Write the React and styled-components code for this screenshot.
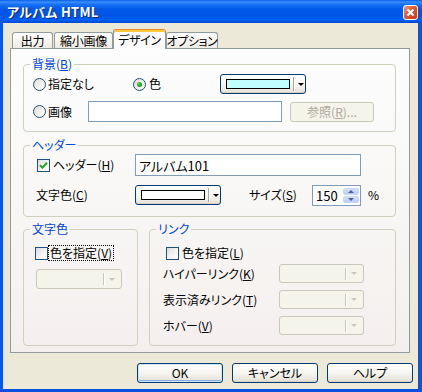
import React from 'react'
import styled, { createGlobalStyle } from 'styled-components'

const GlobalStyle = createGlobalStyle`
html, body { margin: 0; padding: 0; background: #fff; }
body {
  font-family: "Noto Sans CJK JP", "Noto Sans", sans-serif;
  font-size: 12px;
  color: #000;
  font-feature-settings: "palt";
}
* { box-sizing: border-box; }
`

const Window = styled.div`
width: 422px;
height: 392px;
display: flex;
flex-direction: column;
background: #0054e3;
`

const TitleBar = styled.div`
height: 23px;
flex: none;
display: flex;
align-items: center;
justify-content: space-between;
padding: 0 4px 0 7px;
background: linear-gradient(to bottom, #0a5ee6 0%, #3b8ffb 9%, #1a73f5 18%, #0058e8 40%, #0055e5 70%, #0060f2 88%, #0046cf 100%);
`

const Title = styled.div`
color: #fff;
font-weight: bold;
font-size: 13px;
letter-spacing: 0.3px;
text-shadow: 1px 1px 0 #0a2a8a;
`

const CloseButton = styled.div`
width: 15px;
height: 15px;
margin-top: 1px;
border: 1px solid #fff;
border-radius: 3px;
background: linear-gradient(135deg, #f39a7e 0%, #e2582f 45%, #c2391a 100%);
display: flex;
align-items: center;
justify-content: center;
`

const Body = styled.div`
flex: 1;
display: flex;
flex-direction: column;
background: #ece9d8;
border-left: 3px solid #0a55e6;
border-right: 4px solid #0a55e6;
border-bottom: 3px solid #0a4fe0;
padding: 6px 5px 6px 7px;
`

const TabRow = styled.div`
height: 19px;
flex: none;
display: flex;
align-items: flex-end;
padding-left: 2px;
`

const Tab = styled.div`
position: relative;
width: ${p => p.$w}px;
height: ${p => (p.$active ? 20 : 16)}px;
margin-bottom: ${p => (p.$active ? -1 : 0)}px;
margin-left: ${p => p.$ml || 0}px;
z-index: ${p => (p.$active ? 1 : 0)};
border: 1px solid #919b9c;
border-bottom: none;
border-top-color: ${p => (p.$active ? '#e68b2c' : '#919b9c')};
border-radius: 3px 3px 0 0;
background: ${p => (p.$active ? '#fcfcfe' : 'linear-gradient(to bottom, #fefefe, #f4f3ee 60%, #ecebe4)')};
box-shadow: ${p => (p.$active ? 'inset 0 2px 0 #ffc73c' : 'none')};
display: flex;
align-items: center;
justify-content: center;
padding-top: ${p => (p.$active ? 1 : 0)}px;
font-size: 12px;
line-height: 14px;
white-space: nowrap;
letter-spacing: -0.3px;
`

const Panel = styled.div`
height: 305px;
flex: none;
margin-right: 3px;
border: 1px solid #919b9c;
background: linear-gradient(to bottom, #fdfdfe 0%, #f8f7f5 50%, #f4efee 100%);
padding: 8px 13px 6px 12px;
display: flex;
flex-direction: column;
`

const Group = styled.fieldset`
margin: 0;
padding: 0;
min-width: 0;
height: ${p => p.$h}px;
width: ${p => (p.$w ? `${p.$w}px` : 'auto')};
flex: none;
border: 1px solid #d0d0bf;
border-radius: 4px;
margin-top: ${p => p.$mt || 0}px;
`

const Legend = styled.legend`
margin-left: 6px;
padding: 0 2px;
color: #0046d5;
font-size: 12px;
line-height: 14px;
`

const GroupBody = styled.div`
display: flex;
flex-direction: column;
gap: ${p => p.$gap}px;
padding: ${p => p.$pad};
`

const Row = styled.div`
height: ${p => p.$h}px;
margin-bottom: ${p => p.$mb || 0}px;
display: flex;
align-items: center;
`

const GroupPair = styled.div`
display: flex;
gap: 11px;
margin-top: 5px;
`

const ChoiceLabel = styled.label`
display: flex;
align-items: center;
gap: ${p => (p.$gap === undefined ? 3 : p.$gap)}px;
width: ${p => (p.$w ? `${p.$w}px` : 'auto')};
padding-left: ${p => p.$pl || 0}px;
flex: none;
white-space: nowrap;
line-height: 14px;
`

const LabelText = styled.span`
white-space: nowrap;
${p => p.$focus && `
  outline: 1px dotted #000;
  padding: 0 1px;
  margin-left: -1px;
`}
`

const Radio = styled.span`
width: 13px;
height: 13px;
flex: none;
border-radius: 50%;
border: 1px solid #1c5180;
background: linear-gradient(135deg, #dcd9cd 0%, #f2f1ec 55%, #ffffff 100%);
display: flex;
align-items: center;
justify-content: center;
&::after {
  content: '';
  display: ${p => (p.$checked ? 'block' : 'none')};
  width: 5px;
  height: 5px;
  border-radius: 50%;
  background: radial-gradient(circle at 35% 35%, #5bd35b, #21a121 60%, #1a8a1a);
}
`

const Check = styled.span`
width: 13px;
height: 13px;
flex: none;
border: 1px solid #1c5180;
background: linear-gradient(135deg, #dcdcd7 0%, #f4f4f1 55%, #ffffff 100%);
display: flex;
align-items: center;
justify-content: center;
`

const FieldLabel = styled.span`
width: ${p => (p.$w ? `${p.$w}px` : 'auto')};
margin-left: ${p => p.$ml || 0}px;
flex: none;
white-space: nowrap;
line-height: 14px;
`

const TextBox = styled.div`
width: ${p => p.$w}px;
height: ${p => p.$h}px;
flex: none;
border: 1px solid #7f9db9;
background: #fff;
padding-left: 3px;
display: flex;
align-items: center;
font-size: 13px;
`

const ColorCombo = styled.div`
width: 86px;
height: 20px;
flex: none;
border: 1px solid #003c74;
border-radius: 3px;
background: linear-gradient(to bottom, #ffffff 0%, #f5f4ef 60%, #e3e0d5 100%);
box-shadow: inset 0 -1px 0 #d6d0c5;
display: flex;
align-items: center;
padding: 0 4px 0 5px;
gap: 3px;
`

const Swatch = styled.span`
width: 64px;
height: 10px;
flex: none;
border: 1px solid #000;
background: ${p => p.$color};
`

const Separator = styled.span`
width: 2px;
height: ${p => p.$h || 14}px;
flex: none;
border-left: 1px solid ${p => p.$c || '#aca899'};
border-right: 1px solid #fff;
`

const Arrow = styled.span`
width: 0;
height: 0;
flex: none;
border-left: 3px solid transparent;
border-right: 3px solid transparent;
border-top: 3px solid ${p => p.$c || '#000'};
border-bottom: none;
`

const DisabledCombo = styled.div`
width: ${p => p.$w}px;
height: ${p => p.$h}px;
flex: none;
margin-left: ${p => p.$ml || 0}px;
border: 1px solid #c9c7ba;
border-radius: 3px;
background: #f5f4ea;
display: flex;
align-items: center;
justify-content: flex-end;
padding-right: 6px;
gap: 4px;
`

const Spin = styled.div`
width: 49px;
height: 21px;
flex: none;
border: 1px solid #7f9db9;
background: #fff;
display: flex;
align-items: center;
justify-content: space-between;
padding: 2px 1px 2px 3px;
font-size: 13px;
`

const SpinButtons = styled.div`
width: 16px;
height: 100%;
display: flex;
flex-direction: column;
gap: 1px;
`

const SpinButton = styled.div`
flex: 1;
border-radius: 2px;
background: linear-gradient(to bottom, #d4e1fc, #b8cdf8);
border: 1px solid #c6d6f8;
display: flex;
align-items: center;
justify-content: center;
&::after {
  content: '';
  width: 0;
  height: 0;
  border-left: 3px solid transparent;
  border-right: 3px solid transparent;
  ${p => (p.$up ? 'border-bottom: 3px solid #4d6185;' : 'border-top: 3px solid #4d6185;')}
}
`

const PushButton = styled.div`
width: ${p => p.$w}px;
height: ${p => p.$h}px;
flex: none;
margin-left: ${p => p.$ml || 0}px;
border: 1px solid ${p => (p.$disabled ? '#c9c7ba' : '#003c74')};
border-radius: 3px;
background: ${p => (p.$disabled ? '#f5f4ea' : 'linear-gradient(to bottom, #ffffff 0%, #f4f3ee 55%, #e6e3d9 90%, #d6d0c5 100%)')};
color: ${p => (p.$disabled ? '#aca899' : '#000')};
box-shadow: ${p => (p.$default ? 'inset 0 0 0 1px #cee7ff, inset 0 -1px 0 1px #89ade4' : 'none')};
display: flex;
align-items: center;
justify-content: center;
line-height: 14px;
white-space: nowrap;
`

const ButtonRow = styled.div`
display: flex;
justify-content: flex-end;
gap: 9px;
margin-top: 10px;
`

function CheckMark() {
  return (
    <svg width="9" height="9" viewBox="0 0 9 9">
      <path d="M1 4.2 L3.4 6.6 L8 1.8" fill="none" stroke="#21a121" strokeWidth="2" />
    </svg>
  )
}

function DropCombo({ w, h, ml }) {
  return (
    <DisabledCombo $w={w} $h={h} $ml={ml}>
      <Separator $h={12} $c="#c9c7ba" />
      <Arrow $c="#c9c7ba" />
    </DisabledCombo>
  )
}

export default function App() {
  return (
    <>
      <GlobalStyle />
      <Window>
        <TitleBar>
          <Title>アルバム HTML</Title>
          <CloseButton>
            <svg width="9" height="9" viewBox="0 0 9 9">
              <path d="M1.5 1.5 L7.5 7.5 M7.5 1.5 L1.5 7.5" stroke="#fff" strokeWidth="2" />
            </svg>
          </CloseButton>
        </TitleBar>
        <Body>
          <TabRow>
            <Tab $w={41}>出力</Tab>
            <Tab $w={59} $ml={1}>縮小画像</Tab>
            <Tab $w={53} $active>デザイン</Tab>
            <Tab $w={52}>オプション</Tab>
          </TabRow>
          <Panel>
            <Group $h={75}>
              <Legend>背景(<u>B</u>)</Legend>
              <GroupBody $gap={7} $pad="3px 0 0 9px">
                <Row $h={20}>
                  <ChoiceLabel $w={100} $gap={2}><Radio /><LabelText>指定なし</LabelText></ChoiceLabel>
                  <ChoiceLabel $w={87}><Radio $checked /><LabelText>色</LabelText></ChoiceLabel>
                  <ColorCombo>
                    <Swatch $color="#c0ffff" />
                    <Separator />
                    <Arrow />
                  </ColorCombo>
                </Row>
                <Row $h={21}>
                  <ChoiceLabel $w={55} $gap={2}><Radio /><LabelText>画像</LabelText></ChoiceLabel>
                  <TextBox $w={194} $h={21} />
                  <PushButton $w={84} $h={20} $ml={8} $disabled>参照(<u>R</u>)...</PushButton>
                </Row>
              </GroupBody>
            </Group>

            <Group $h={79} $mt={6}>
              <Legend>ヘッダー</Legend>
              <GroupBody $gap={8} $pad="2px 0 0 12px">
                <Row $h={22}>
                  <ChoiceLabel $w={99} $pl={1}>
                    <Check><CheckMark /></Check>
                    <LabelText>ヘッダー(<u>H</u>)</LabelText>
                  </ChoiceLabel>
                  <TextBox $w={226} $h={22}>アルバム101</TextBox>
                </Row>
                <Row $h={22}>
                  <FieldLabel $w={99}>文字色(<u>C</u>)</FieldLabel>
                  <ColorCombo>
                    <Swatch $color="#ffffff" />
                    <Separator />
                    <Arrow />
                  </ColorCombo>
                  <FieldLabel $w={63} $ml={28}>サイズ(<u>S</u>)</FieldLabel>
                  <Spin>
                    150
                    <SpinButtons>
                      <SpinButton $up />
                      <SpinButton />
                    </SpinButtons>
                  </Spin>
                  <FieldLabel $ml={7}>%</FieldLabel>
                </Row>
              </GroupBody>
            </Group>

            <GroupPair>
              <Group $h={124} $w={115}>
                <Legend>文字色</Legend>
                <GroupBody $gap={8} $pad="9px 0 0 11px">
                  <Row $h={16}>
                    <ChoiceLabel $gap={2}>
                      <Check />
                      <LabelText $focus>色を指定(<u>V</u>)</LabelText>
                    </ChoiceLabel>
                  </Row>
                  <DropCombo w={86} h={20} ml={1} />
                </GroupBody>
              </Group>

              <Group $h={124} $w={247}>
                <Legend>リンク</Legend>
                <GroupBody $gap={7} $pad="9px 0 0 13px">
                  <Row $h={16} $mb={-4}>
                    <ChoiceLabel $pl={3}>
                      <Check />
                      <LabelText>色を指定(<u>L</u>)</LabelText>
                    </ChoiceLabel>
                  </Row>
                  <Row $h={19}>
                    <FieldLabel $w={116}>ハイパーリンク(<u>K</u>)</FieldLabel>
                    <DropCombo w={85} h={19} />
                  </Row>
                  <Row $h={19}>
                    <FieldLabel $w={116}>表示済みリンク(<u>T</u>)</FieldLabel>
                    <DropCombo w={85} h={19} />
                  </Row>
                  <Row $h={19}>
                    <FieldLabel $w={116}>ホバー(<u>V</u>)</FieldLabel>
                    <DropCombo w={85} h={19} />
                  </Row>
                </GroupBody>
              </Group>
            </GroupPair>
          </Panel>
          <ButtonRow>
            <PushButton $w={86} $h={20} $default>OK</PushButton>
            <PushButton $w={86} $h={20}>キャンセル</PushButton>
            <PushButton $w={86} $h={20}>ヘルプ</PushButton>
          </ButtonRow>
        </Body>
      </Window>
    </>
  )
}
